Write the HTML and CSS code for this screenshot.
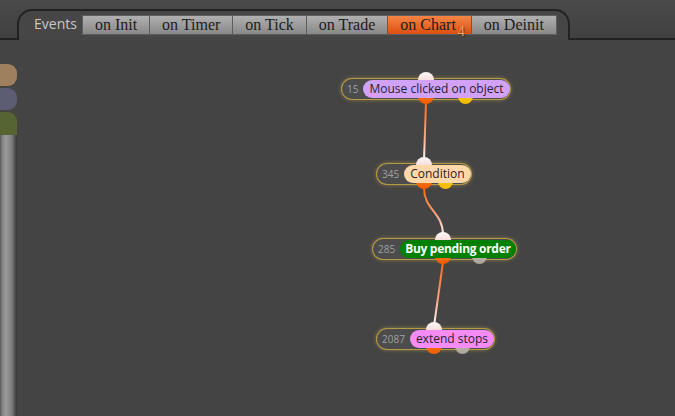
FILE: index.html
```html
<!DOCTYPE html>
<html lang="en">
<head>
  <meta charset="UTF-8">
  <title>Events</title>
  <link rel="stylesheet" href="styles.css">
</head>
<body>
  <div class="header">
    <div class="cap-left"></div>
    <div class="tabbox">
      <span class="events-title">Events</span>
      <div class="tabs">
        <div class="tab">on Init</div>
        <div class="tab">on Timer</div>
        <div class="tab">on Tick</div>
        <div class="tab">on Trade</div>
        <div class="tab active">on Chart <span class="count">4</span></div>
        <div class="tab">on Deinit</div>
      </div>
    </div>
    <div class="cap-right"></div>
  </div>

  <div class="main">
    <div class="side">
      <div class="side-tab tan"></div>
      <div class="side-tab slate"></div>
      <div class="side-tab olive"></div>
      <div class="scroll"></div>
    </div>

    <svg class="wires" width="675" height="376">
      <defs>
        <linearGradient id="w1" gradientUnits="userSpaceOnUse" x1="0" y1="64" x2="0" y2="118">
          <stop offset="0" stop-color="#ff6a12"/>
          <stop offset="0.55" stop-color="#f7a07a"/>
          <stop offset="1" stop-color="#fff4f0"/>
        </linearGradient>
        <linearGradient id="w2" gradientUnits="userSpaceOnUse" x1="0" y1="150" x2="0" y2="194">
          <stop offset="0" stop-color="#ff6a12"/>
          <stop offset="0.55" stop-color="#f7a07a"/>
          <stop offset="1" stop-color="#fff4f0"/>
        </linearGradient>
        <linearGradient id="w3" gradientUnits="userSpaceOnUse" x1="0" y1="225" x2="0" y2="284">
          <stop offset="0" stop-color="#ff6a12"/>
          <stop offset="0.55" stop-color="#f7a07a"/>
          <stop offset="1" stop-color="#fff4f0"/>
        </linearGradient>
      </defs>
      <path d="M426 62 L424 120" stroke="url(#w1)" stroke-width="2" fill="none"/>
      <path d="M424 148 C424 170 443 172 443 195" stroke="url(#w2)" stroke-width="2" fill="none"/>
      <path d="M443 222 L434 286" stroke="url(#w3)" stroke-width="2" fill="none"/>
    </svg>

    <div class="node" style="left:342px;top:39px">
      <span class="pin pin-in" style="left:76px"></span>
      <span class="pin pin-out" style="left:76px"></span>
      <span class="pin pin-yellow" style="left:116px"></span>
      <span class="num">15</span>
      <span class="label purple">Mouse clicked on object</span>
    </div>

    <div class="node" style="left:377px;top:124px">
      <span class="pin pin-in" style="left:39px"></span>
      <span class="pin pin-out" style="left:39px"></span>
      <span class="pin pin-yellow" style="left:61px"></span>
      <span class="num">345</span>
      <span class="label peach">Condition</span>
    </div>

    <div class="node" style="left:373px;top:199px">
      <span class="pin pin-in" style="left:62px"></span>
      <span class="pin pin-out" style="left:62px"></span>
      <span class="pin pin-grey" style="left:99px"></span>
      <span class="num">285</span>
      <span class="label green">Buy pending order</span>
    </div>

    <div class="node" style="left:377px;top:289px">
      <span class="pin pin-in" style="left:49px"></span>
      <span class="pin pin-out" style="left:49px"></span>
      <span class="pin pin-grey" style="left:78px"></span>
      <span class="num">2087</span>
      <span class="label pink">extend stops</span>
    </div>
  </div>
</body>
</html>
```

FILE: styles.css
```css
body {
  margin: 0;
  width: 675px;
  height: 416px;
  overflow: hidden;
  background-color: #444444;
  font-family: "Open Sans", "DejaVu Sans", sans-serif;
}
.header {
  display: flex;
  height: 40px;
  background: linear-gradient(#4a4a4a, #404040);
}
.cap-left {
  width: 17px;
  border-bottom: 2px solid #222;
}
.cap-right {
  flex: 1;
  border-bottom: 2px solid #222;
}
.tabbox {
  box-sizing: border-box;
  width: 553px;
  margin-top: 9px;
  border: 2px solid #222;
  border-bottom: none;
  border-radius: 15px 15px 0 0;
  background: #464646;
  display: flex;
  align-items: flex-start;
  padding-left: 15px;
}
.events-title {
  color: #c8c8c8;
  font-size: 14px;
  margin-top: 3px;
  margin-right: 5px;
}
.tabs {
  display: flex;
  margin-top: 4px;
}
.tab {
  position: relative;
  height: 18px;
  line-height: 18px;
  padding: 0 12px;
  font-family: "Liberation Serif", serif;
  font-size: 16px;
  color: #1c1c1c;
  background: linear-gradient(#b0b0b0, #888888);
  border: 1px solid #5e5e5e;
  border-left: none;
}
.tab:first-child {
  border-left: 1px solid #5e5e5e;
}
.tab.active {
  padding-right: 15px;
  background: linear-gradient(#f58545, #dd4f10);
}
.count {
  position: absolute;
  right: 6px;
  top: 7px;
  font-size: 14px;
  color: #e8a468;
  text-shadow: 1px 1px 1px #5a2a10;
}
.main {
  position: relative;
  height: 376px;
}
.side {
  display: flex;
  flex-direction: column;
  width: 17px;
  padding-top: 24px;
  height: 352px;
}
.side-tab {
  height: 22px;
  border-radius: 0 9px 9px 0;
  margin-bottom: 2px;
}
.tan {
  background-color: #9e7f5e;
}
.slate {
  background-color: #5c5c72;
}
.olive {
  background-color: #566432;
  height: 23px;
  margin-bottom: 0;
  border-radius: 0 9px 0 0;
}
.scroll {
  flex: 1;
  width: 17px;
  background: linear-gradient(to right, #5a5a5a, #858585 15%, #9a9a9a 35%, #7c7c7c 70%, #585858 85%, #333 100%);
}
.wires {
  position: absolute;
  left: 0;
  top: 0;
}
.node {
  position: absolute;
  display: flex;
  align-items: center;
  height: 20px;
  padding-left: 5px;
  border-radius: 10px;
  background-color: #4c4c4c;
  box-shadow: 0 0 0 1px rgba(190, 160, 70, 0.9), 0 0 5px rgba(240, 205, 90, 0.6);
}
.num {
  position: relative;
  z-index: 1;
  font-size: 10px;
  color: #a0a0a0;
  margin-right: 5px;
}
.label {
  position: relative;
  z-index: 1;
  height: 18px;
  line-height: 18px;
  padding: 0 6px;
  border-radius: 9px;
  font-size: 12px;
  color: #2a2030;
}
.purple {
  background-color: #d2a2f8;
}
.peach {
  background-color: #ffd8a8;
}
.green {
  background-color: #008000;
  color: #ffffff;
  font-weight: bold;
  letter-spacing: -0.3px;
  padding: 0 5px;
}
.pink {
  background-color: #f58cf5;
}
.pin {
  position: absolute;
  width: 16px;
  height: 16px;
  border-radius: 50%;
  z-index: 0;
}
.pin-in {
  top: -7px;
  background: linear-gradient(#fff8f8, #f0c4c4);
}
.pin-out {
  top: 9px;
  background: linear-gradient(#ff8a30, #f05a00);
}
.pin-yellow {
  top: 10px;
  width: 15px;
  height: 15px;
  background: linear-gradient(#ffd21a, #f2b800);
}
.pin-grey {
  top: 10px;
  width: 15px;
  height: 15px;
  background: linear-gradient(#c8c2b8, #a8a298);
}
```
